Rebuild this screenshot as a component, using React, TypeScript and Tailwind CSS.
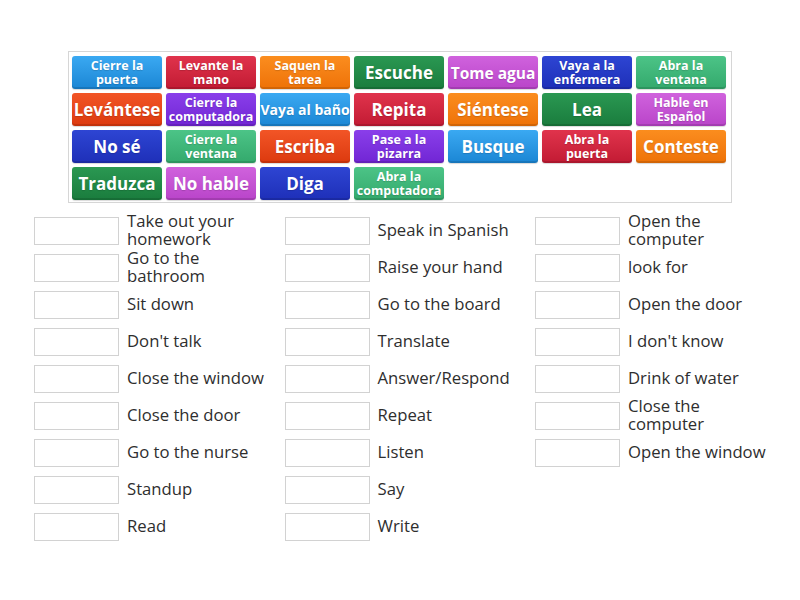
const palette = {
  blue: "bg-gradient-to-b from-[#3aa9f2] to-[#1a86d4]",
  red: "bg-gradient-to-b from-[#e0334c] to-[#c21a33]",
  orange: "bg-gradient-to-b from-[#fb8d1e] to-[#ee7206]",
  green: "bg-gradient-to-b from-[#2a9852] to-[#1a7c3d]",
  pink: "bg-gradient-to-b from-[#d062dd] to-[#b944c9]",
  navy: "bg-gradient-to-b from-[#2e45d3] to-[#1e2fb8]",
  teal: "bg-gradient-to-b from-[#4cc487] to-[#33a96c]",
  flame: "bg-gradient-to-b from-[#f25526] to-[#dc390d]",
  violet: "bg-gradient-to-b from-[#8a3eea] to-[#7125d4]",
} as const;

type Tile = { text: string; color: keyof typeof palette; size: "lg" | "md" | "mds" | "sm" };

const tiles: Tile[] = [
  { text: "Cierre la puerta", color: "blue", size: "sm" },
  { text: "Levante la mano", color: "red", size: "sm" },
  { text: "Saquen la tarea", color: "orange", size: "sm" },
  { text: "Escuche", color: "green", size: "lg" },
  { text: "Tome agua", color: "pink", size: "md" },
  { text: "Vaya a la enfermera", color: "navy", size: "sm" },
  { text: "Abra la ventana", color: "teal", size: "sm" },
  { text: "Levántese", color: "flame", size: "lg" },
  { text: "Cierre la computadora", color: "violet", size: "sm" },
  { text: "Vaya al baño", color: "blue", size: "mds" },
  { text: "Repita", color: "red", size: "lg" },
  { text: "Siéntese", color: "orange", size: "lg" },
  { text: "Lea", color: "green", size: "lg" },
  { text: "Hable en Español", color: "pink", size: "sm" },
  { text: "No sé", color: "navy", size: "lg" },
  { text: "Cierre la ventana", color: "teal", size: "sm" },
  { text: "Escriba", color: "flame", size: "lg" },
  { text: "Pase a la pizarra", color: "violet", size: "sm" },
  { text: "Busque", color: "blue", size: "lg" },
  { text: "Abra la puerta", color: "red", size: "sm" },
  { text: "Conteste", color: "orange", size: "lg" },
  { text: "Traduzca", color: "green", size: "lg" },
  { text: "No hable", color: "pink", size: "lg" },
  { text: "Diga", color: "navy", size: "lg" },
  { text: "Abra la computadora", color: "teal", size: "sm" },
];

const sizeClass = {
  lg: "text-[17px] leading-[20px] px-1",
  md: "text-[15.5px] leading-[18px] whitespace-nowrap",
  mds: "text-[14px] leading-[18px] whitespace-nowrap",
  sm: "text-[12.5px] leading-[14px] px-1",
};

const columns = [
  [
    "Take out your homework",
    "Go to the bathroom",
    "Sit down",
    "Don't talk",
    "Close the window",
    "Close the door",
    "Go to the nurse",
    "Standup",
    "Read",
  ],
  [
    "Speak in Spanish",
    "Raise your hand",
    "Go to the board",
    "Translate",
    "Answer/Respond",
    "Repeat",
    "Listen",
    "Say",
    "Write",
  ],
  [
    "Open the computer",
    "look for",
    "Open the door",
    "I don't know",
    "Drink of water",
    "Close the computer",
    "Open the window",
  ],
];

export default function App() {
  return (
    <div className="h-[600px] w-[800px] bg-white font-['Open_Sans',sans-serif]">
      <div className="pt-[51px]">
        <div className="mx-auto w-[664px] border border-[#d6d6d6] px-[3px] pt-[4px] pb-[2px]">
          <div className="grid grid-cols-[repeat(7,90px)] gap-x-[4px] gap-y-[4px]">
            {tiles.map((tile) => (
              <div
                key={tile.text}
                className={`flex h-[33px] items-center justify-center rounded-[3px] text-center font-bold text-white shadow-[inset_0_-2px_0_rgba(0,0,0,0.12),0_1px_1px_rgba(0,0,0,0.15)] [text-shadow:0_1px_1px_rgba(0,0,0,0.15)] ${palette[tile.color]} ${sizeClass[tile.size]}`}
              >
                {tile.text}
              </div>
            ))}
          </div>
        </div>
      </div>

      <div className="mt-[14px] ml-[34px] flex">
        {columns.map((items, i) => (
          <div key={i} className="flex w-[250.5px] flex-col gap-[9px]">
            {items.map((label) => (
              <div key={label} className="flex h-[28px] items-center">
                <div className="h-[28px] w-[85px] shrink-0 border border-[#d2d2d2] bg-white" />
                <div className="ml-[8px] w-[145px] pb-[3px] text-[16.7px] leading-[18px] text-[#2e2e2e]">
                  {label}
                </div>
              </div>
            ))}
          </div>
        ))}
      </div>
    </div>
  );
}
